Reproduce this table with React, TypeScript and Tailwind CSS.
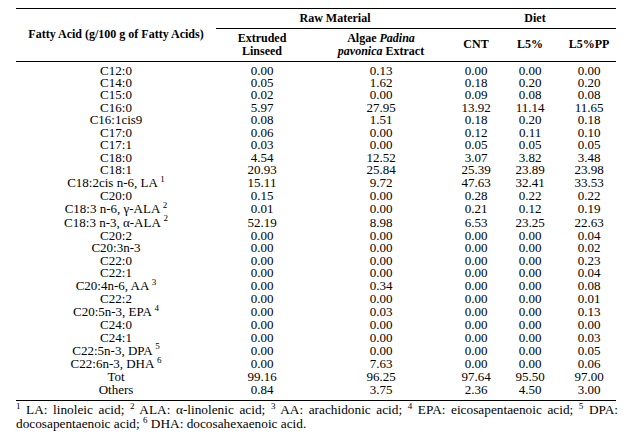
import React from 'react';

type Row = {
    name: string;
    note?: string;
    values: string[];
};

const rows: Row[] = [
    { name: 'C12:0', values: ['0.00', '0.13', '0.00', '0.00', '0.00'] },
    { name: 'C14:0', values: ['0.05', '1.62', '0.18', '0.20', '0.20'] },
    { name: 'C15:0', values: ['0.02', '0.00', '0.09', '0.08', '0.08'] },
    { name: 'C16:0', values: ['5.97', '27.95', '13.92', '11.14', '11.65'] },
    { name: 'C16:1cis9', values: ['0.08', '1.51', '0.18', '0.20', '0.18'] },
    { name: 'C17:0', values: ['0.06', '0.00', '0.12', '0.11', '0.10'] },
    { name: 'C17:1', values: ['0.03', '0.00', '0.05', '0.05', '0.05'] },
    { name: 'C18:0', values: ['4.54', '12.52', '3.07', '3.82', '3.48'] },
    { name: 'C18:1', values: ['20.93', '25.84', '25.39', '23.89', '23.98'] },
    { name: 'C18:2cis n-6, LA', note: '1', values: ['15.11', '9.72', '47.63', '32.41', '33.53'] },
    { name: 'C20:0', values: ['0.15', '0.00', '0.28', '0.22', '0.22'] },
    { name: 'C18:3 n-6, γ-ALA', note: '2', values: ['0.01', '0.00', '0.21', '0.12', '0.19'] },
    { name: 'C18:3 n-3, α-ALA', note: '2', values: ['52.19', '8.98', '6.53', '23.25', '22.63'] },
    { name: 'C20:2', values: ['0.00', '0.00', '0.00', '0.00', '0.04'] },
    { name: 'C20:3n-3', values: ['0.00', '0.00', '0.00', '0.00', '0.02'] },
    { name: 'C22:0', values: ['0.00', '0.00', '0.00', '0.00', '0.23'] },
    { name: 'C22:1', values: ['0.00', '0.00', '0.00', '0.00', '0.04'] },
    { name: 'C20:4n-6, AA', note: '3', values: ['0.00', '0.34', '0.00', '0.00', '0.08'] },
    { name: 'C22:2', values: ['0.00', '0.00', '0.00', '0.00', '0.01'] },
    { name: 'C20:5n-3, EPA', note: '4', values: ['0.00', '0.03', '0.00', '0.00', '0.13'] },
    { name: 'C24:0', values: ['0.00', '0.00', '0.00', '0.00', '0.00'] },
    { name: 'C24:1', values: ['0.00', '0.00', '0.00', '0.00', '0.03'] },
    { name: 'C22:5n-3, DPA', note: '5', values: ['0.00', '0.00', '0.00', '0.00', '0.05'] },
    { name: 'C22:6n-3, DHA', note: '6', values: ['0.00', '7.63', '0.00', '0.00', '0.06'] },
    { name: 'Tot', values: ['99.16', '96.25', '97.64', '95.50', '97.00'] },
    { name: 'Others', values: ['0.84', '3.75', '2.36', '4.50', '3.00'] },
];

const Sup = ({ children }: { children: React.ReactNode }) => (
    <sup className="text-[9px] top-[-0.6em]">{children}</sup>
);

export default function App() {
    return (
        <div
            className="w-[642px] h-[447px] bg-white text-black pt-2 px-4"
            style={{ fontFamily: '"Liberation Serif", "Times New Roman", serif' }}
        >
            <table className="w-[600px] table-fixed border-collapse">
                <colgroup>
                    <col className="w-[200px]" />
                    <col className="w-[92px]" />
                    <col className="w-[146px]" />
                    <col className="w-[44px]" />
                    <col className="w-[64px]" />
                    <col className="w-[54px]" />
                </colgroup>
                <thead className="text-[12px] font-bold leading-[13.5px]">
                    <tr className="h-[20px] border-t border-black">
                        <th rowSpan={2} className="p-0 align-middle font-bold border-b border-black">
                            Fatty Acid (g/100 g of Fatty Acids)
                        </th>
                        <th colSpan={2} className="p-0 font-bold border-b border-black">
                            Raw Material
                        </th>
                        <th colSpan={3} className="p-0 font-bold border-b border-black">
                            Diet
                        </th>
                    </tr>
                    <tr className="h-[33px] border-b border-black">
                        <th className="p-0 font-bold">
                            Extruded
                            <br />
                            Linseed
                        </th>
                        <th className="p-0 font-bold">
                            Algae <i>Padina</i>
                            <br />
                            <i>pavonica</i> Extract
                        </th>
                        <th className="p-0 font-bold">CNT</th>
                        <th className="p-0 font-bold">L5%</th>
                        <th className="p-0 font-bold">L5%PP</th>
                    </tr>
                </thead>
                <tbody className="text-[13px] leading-[12px]">
                    {rows.map((row, i) => {
                        const first = i === 0;
                        const last = i === rows.length - 1;
                        let cls = row.note ? 'h-[13.5px]' : 'h-[12.5px]';
                        if (first) cls = 'h-[15px] align-bottom';
                        if (last) cls = 'h-[17px] align-top border-b border-black';
                        return (
                            <tr key={row.name} className={cls}>
                                <td className="p-0 text-center whitespace-nowrap">
                                    {row.name}
                                    {row.note && (
                                        <>
                                            {' '}
                                            <Sup>{row.note}</Sup>
                                        </>
                                    )}
                                </td>
                                {row.values.map((v, j) => (
                                    <td key={j} className="p-0 text-center">
                                        {v}
                                    </td>
                                ))}
                            </tr>
                        );
                    })}
                </tbody>
            </table>
            <p className="w-[602px] mt-[2px] text-[13.3px] leading-[14px] text-justify [text-align-last:left]">
                <Sup>1</Sup> LA: linoleic acid; <Sup>2</Sup> ALA: α-linolenic acid; <Sup>3</Sup> AA: arachidonic acid;{' '}
                <Sup>4</Sup> EPA: eicosapentaenoic acid; <Sup>5</Sup> DPA: docosapentaenoic acid; <Sup>6</Sup> DHA:
                docosahexaenoic acid.
            </p>
        </div>
    );
}
